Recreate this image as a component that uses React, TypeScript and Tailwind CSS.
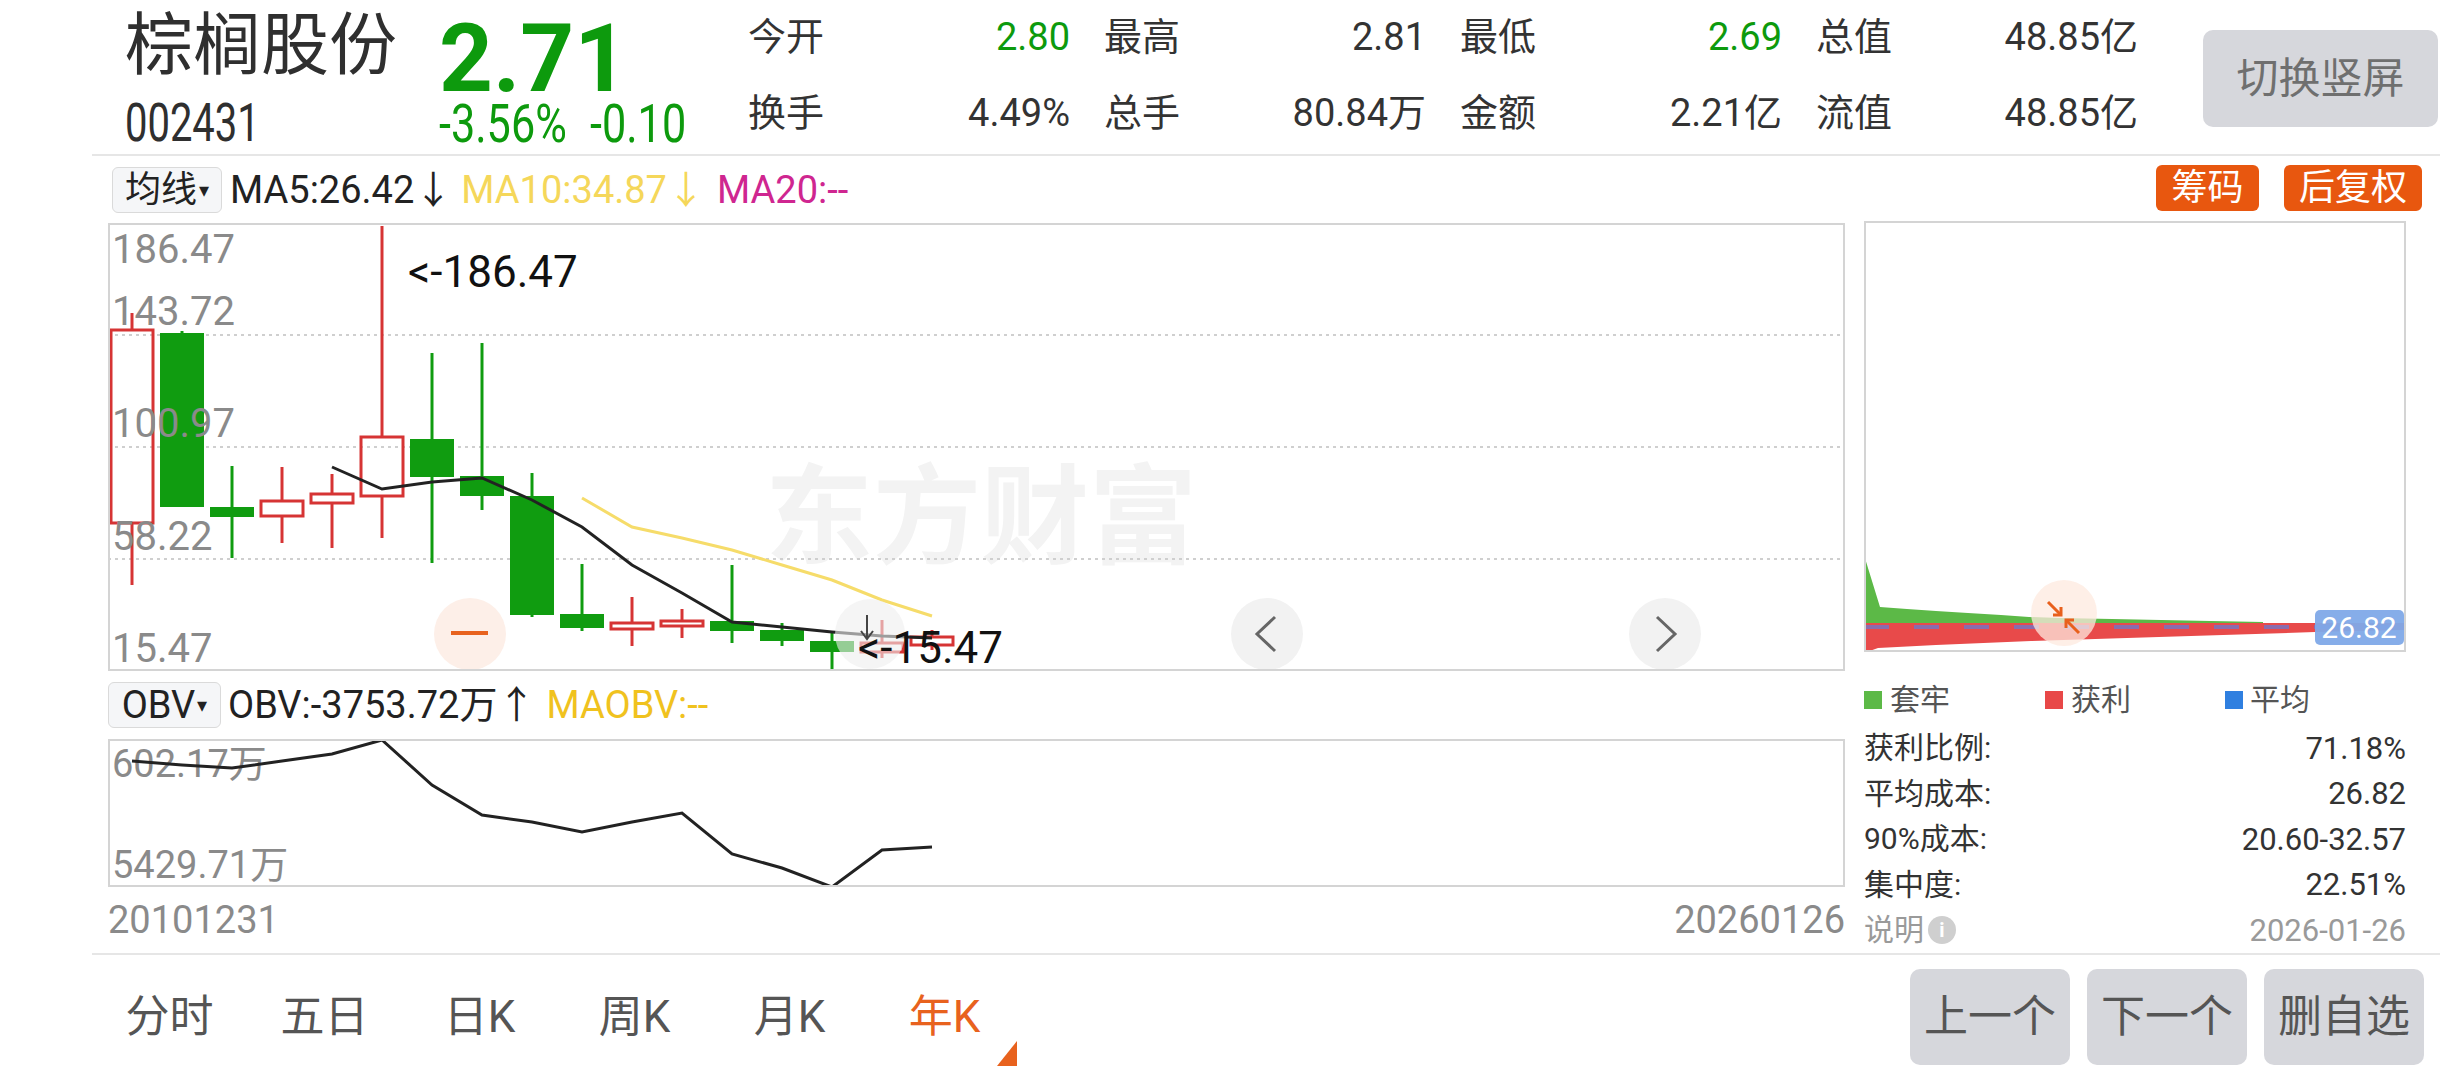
import React from "react";

const font = "font-['Roboto','Noto_Sans_CJK_SC',sans-serif]";

const green = "#109c10";
const red = "#d63434";

// [isRed, bodyTop, bodyBottom, wickTop, wickBottom] in chart pixels
const candles: number[][] = [
    [1, 107, 300, 90, 362],
    [0, 110, 284, 108, 284],
    [0, 284, 294, 243, 335],
    [1, 278, 293, 244, 320],
    [1, 271, 280, 251, 325],
    [1, 214, 273, 3, 315],
    [0, 216, 254, 130, 340],
    [0, 253, 273, 120, 287],
    [0, 273, 392, 250, 394],
    [0, 391, 405, 341, 408],
    [1, 400, 406, 374, 423],
    [1, 398, 403, 386, 415],
    [0, 398, 408, 342, 420],
    [0, 407, 418, 400, 423],
    [0, 418, 429, 409, 447],
    [1, 420, 429, 397, 435],
    [1, 414, 422, 407, 427],
];

const ma5 = [244, 266, 259, 255, 277, 304, 342, 370, 399, 404, 409, 413, 415];
const ma10 = [275, 304, 315, 327, 342, 357, 377, 393];
const obv = [22, 26, 29, 22, 15, 1, 46, 76, 83, 93, 83, 74, 115, 129, 148, 111, 108];

const cx = (i: number) => 24 + 50 * i;
const pts = (arr: number[], start: number) => arr.map((y, k) => `${cx(start + k)},${y}`).join(" ");

const quote: [string, string, boolean][][] = [
    [["今开", "2.80", true], ["最高", "2.81", false], ["最低", "2.69", true], ["总值", "48.85亿", false]],
    [["换手", "4.49%", false], ["总手", "80.84万", false], ["金额", "2.21亿", false], ["流值", "48.85亿", false]],
];

function Header() {
    return (
        <div className="flex h-[156px] ml-[92px] border-b-2 border-[#e6e6e6]">
            <div className="w-[347px] pl-[33px] flex flex-col text-[#2f2f2f]">
                <div className="mt-[12px] text-[68px] leading-[68px]">棕榈股份</div>
                <div className="mt-[18px] h-[50px] flex items-center">
                    <span className="inline-block origin-left scale-x-[0.74] text-[54px] leading-none">002431</span>
                </div>
            </div>
            <div className="w-[309px] flex flex-col text-[#0d9a0d]">
                <div className="mt-[19px] h-[80px] text-[94px] leading-[80px] font-bold">2.71</div>
                <div className="h-[50px] flex items-center gap-[29px] origin-left scale-x-[0.8] text-[54px] leading-none">
                    <span>-3.56%</span>
                    <span>-0.10</span>
                </div>
            </div>
            <div className="mt-[14px] grid grid-cols-[repeat(4,322px)] auto-rows-[46px] gap-x-[34px] gap-y-[30px] text-[38px] leading-none text-[#333]">
                {quote.flat().map(([k, v, g]) => (
                    <div key={k} className="flex items-center justify-between">
                        <span>{k}</span>
                        <span className={g ? "text-[#0d9a0d]" : ""}>{v}</span>
                    </div>
                ))}
            </div>
            <button className="ml-auto mr-[2px] mt-[30px] w-[235px] h-[97px] rounded-[10px] bg-[#d6d7dc] text-[42px] text-[#6f6f6f] flex items-center justify-center">切换竖屏</button>
        </div>
    );
}

function KChart() {
    return (
        <div className="h-[448px] border-2 border-[#d4d4d4] overflow-hidden">
            <svg width="1737" height="448" className={"-ml-[2px] -mt-[2px] " + font}>
                <text x="657" y="332" fontSize="108" fontWeight="700" fill="#f3f3f3">东方财富</text>
                {[112, 224, 336].map((y) => (
                    <line key={y} x1="0" x2="1737" y1={y} y2={y} stroke="#cfcfcf" strokeWidth="2" strokeDasharray="3 4" />
                ))}
                {candles.map(([isRed, bt, bb, wt, wb], i) => {
                    const x = cx(i);
                    return isRed ? (
                        <g key={i} stroke={red} strokeWidth="3" fill="none">
                            <line x1={x} x2={x} y1={wt} y2={bt} />
                            <line x1={x} x2={x} y1={bb} y2={wb} />
                            <rect x={x - 21} y={bt} width="42" height={bb - bt} />
                        </g>
                    ) : (
                        <g key={i}>
                            <line x1={x} x2={x} y1={wt} y2={wb} stroke={green} strokeWidth="3" />
                            <rect x={x - 22} y={bt} width="44" height={Math.max(bb - bt, 3)} fill={green} />
                        </g>
                    );
                })}
                <g fontSize="40" fill="#8a8a8a">
                    <text x="4" y="40">186.47</text>
                    <text x="4" y="102">143.72</text>
                    <text x="4" y="214">100.97</text>
                    <text x="4" y="327">58.22</text>
                    <text x="4" y="439">15.47</text>
                </g>
                <polyline points={pts(ma10, 9)} fill="none" stroke="#f6dc6a" strokeWidth="3" />
                <polyline points={pts(ma5, 4)} fill="none" stroke="#222" strokeWidth="3" />
                <text x="300" y="64" fontSize="44" fill="#111">&lt;-186.47</text>
                <circle cx="362" cy="411" r="36" fill="#fdefe8" />
                <line x1="343" x2="380" y1="410" y2="410" stroke="#e8621e" strokeWidth="4" />
                <circle cx="762" cy="411" r="35" fill="#eeeeee" opacity="0.6" />
                <g stroke="#444" strokeWidth="2" fill="none">
                    <line x1="759" x2="759" y1="392" y2="416" />
                    <polyline points="753,408 759,416 765,408" />
                </g>
                <text x="750" y="440" fontSize="44" fill="#111">&lt;-15.47</text>
                <circle cx="1159" cy="411" r="36" fill="#f2f2f2" />
                <polyline points="1167,394 1149,411 1167,428" fill="none" stroke="#666" strokeWidth="3" />
                <circle cx="1557" cy="411" r="36" fill="#f2f2f2" />
                <polyline points="1549,394 1567,411 1549,428" fill="none" stroke="#666" strokeWidth="3" />
            </svg>
        </div>
    );
}

function ObvChart() {
    return (
        <div className="h-[148px] border-2 border-[#d4d4d4] overflow-hidden">
            <svg width="1737" height="148" className={"-ml-[2px] -mt-[2px] " + font}>
                <g fontSize="38" fill="#8a8a8a">
                    <text x="4" y="38">602.17万</text>
                    <text x="4" y="139">5429.71万</text>
                </g>
                <polyline points={pts(obv, 0)} fill="none" stroke="#222" strokeWidth="3" />
            </svg>
        </div>
    );
}

function ChipChart() {
    const green2 = "0,334 16,386 43,388 72,390 104,392 137,394 165,396 196,397 248,398 297,399 347,400 399,401 399,403 0,403";
    const red2 = "0,402 541,402 541,409 451,411 359,414 263,417 167,420 72,424 14,427 0,432";
    return (
        <div className="w-[542px] h-[434px] border-2 border-[#d4d4d4] overflow-hidden">
            <svg width="542" height="434" className={"-ml-[2px] -mt-[2px] " + font}>
                <polygon points={green2} fill="#5cb947" />
                <polygon points={red2} fill="#e84a4a" />
                <line x1="0" x2="541" y1="406" y2="406" stroke="#8a6cae" strokeWidth="4" strokeDasharray="25 25" />
                <circle cx="200" cy="392" r="33" fill="#fde9df" opacity="0.75" />
                <g stroke="#e8601c" strokeWidth="3" fill="none">
                    <line x1="184" y1="381" x2="197" y2="394" />
                    <polyline points="189,394 197,394 197,386" />
                    <line x1="215" y1="412" x2="202" y2="399" />
                    <polyline points="210,399 202,399 202,407" />
                </g>
                <rect x="451" y="389" width="89" height="35" rx="5" fill="#80a9e8" opacity="0.95" />
                <text x="495" y="417" fontSize="30" fill="#fff" textAnchor="middle">26.82</text>
            </svg>
        </div>
    );
}

function ChipInfo() {
    const rows = [
        ["获利比例:", "71.18%"],
        ["平均成本:", "26.82"],
        ["90%成本:", "20.60-32.57"],
        ["集中度:", "22.51%"],
    ];
    return (
        <div className="w-[542px] flex flex-col pt-[28px] text-[30px] leading-none">
            <div className="h-[40px] flex items-center text-[#555]">
                <div className="w-[181px] flex items-center gap-[8px]">
                    <span className="w-[18px] h-[18px] bg-[#5cb947]" />
                    <span>套牢</span>
                </div>
                <div className="w-[180px] flex items-center gap-[8px]">
                    <span className="w-[18px] h-[18px] bg-[#e84848]" />
                    <span>获利</span>
                </div>
                <div className="flex items-center gap-[7px]">
                    <span className="w-[18px] h-[18px] bg-[#2f7fe0]" />
                    <span>平均</span>
                </div>
            </div>
            <div className="mt-[6px] flex flex-col text-[#333]">
                {rows.map(([k, v]) => (
                    <div key={k} className="h-[45.5px] flex items-center justify-between">
                        <span>{k}</span>
                        <span className="text-[31px]">{v}</span>
                    </div>
                ))}
                <div className="h-[45.5px] flex items-center justify-between text-[#9a9a9a]">
                    <span className="flex items-center gap-[4px]">
                        说明
                        <span className="w-[28px] h-[28px] rounded-full bg-[#cfcfcf] text-white text-[20px] font-bold flex items-center justify-center">i</span>
                    </span>
                    <span className="text-[31px]">2026-01-26</span>
                </div>
            </div>
        </div>
    );
}

function BottomBar() {
    const tabs = ["分时", "五日", "日K", "周K", "月K", "年K"];
    return (
        <div className="h-[125px] ml-[92px] border-t-2 border-[#e6e6e6] flex items-center">
            {tabs.map((t, i) => (
                <div key={t} className={"relative w-[155px] h-full flex items-center justify-center text-[44px] " + (i === 5 ? "text-[#e8621e]" : "text-[#555]")}>
                    {t}
                    {i === 5 && (
                        <svg width="20" height="25" className="absolute right-[5px] bottom-[12px]">
                            <polygon points="20,0 20,25 0,25" fill="#e8621e" />
                        </svg>
                    )}
                </div>
            ))}
            <div className="ml-auto mr-[16px] flex gap-[17px]">
                {["上一个", "下一个", "删自选"].map((b) => (
                    <button key={b} className="w-[160px] h-[96px] rounded-[10px] bg-[#d6d7dc] text-[44px] text-[#555] flex items-center justify-center">{b}</button>
                ))}
            </div>
        </div>
    );
}

export default function App() {
    return (
        <div className={"w-[2440px] h-[1080px] bg-white overflow-hidden text-[#333] " + font}>
            <Header />
            <div className="flex h-[797px] pl-[108px]">
                <div className="w-[1737px] flex flex-col">
                    <div className="h-[67px] flex items-center text-[38px] leading-none">
                        <div className="ml-[4px] w-[110px] h-[46px] rounded-[6px] border border-[#dadada] bg-[#f5f6f8] flex items-center justify-center text-[36px] text-[#222]">
                            均线<span className="text-[20px] ml-[2px]">▾</span>
                        </div>
                        <span className="ml-[8px] text-[#222]">MA5:26.42↓</span>
                        <span className="ml-[9px] text-[#f5d75a]">MA10:34.87↓</span>
                        <span className="ml-[12px] text-[#cf2690]">MA20:--</span>
                    </div>
                    <KChart />
                    <div className="h-[68px] flex items-center text-[38px] leading-none">
                        <div className="w-[113px] h-[46px] rounded-[6px] border border-[#dadada] bg-[#f5f6f8] flex items-center justify-center text-[#222]">
                            OBV<span className="text-[20px] ml-[2px]">▾</span>
                        </div>
                        <span className="ml-[7px] text-[#222]">OBV:-3753.72万↑</span>
                        <span className="ml-[11px] text-[#f0c21e]">MAOBV:--</span>
                    </div>
                    <ObvChart />
                    <div className="h-[66px] flex items-center justify-between text-[38px] text-[#8a8a8a]">
                        <span>20101231</span>
                        <span>20260126</span>
                    </div>
                </div>
                <div className="w-[558px] ml-[19px] flex flex-col">
                    <div className="h-[65px] flex items-center justify-end gap-[25px] text-[36px] text-white">
                        <span className="w-[103px] h-[46px] rounded-[6px] bg-[#e8570f] flex items-center justify-center">筹码</span>
                        <span className="w-[138px] h-[46px] rounded-[6px] bg-[#e8570f] flex items-center justify-center">后复权</span>
                    </div>
                    <ChipChart />
                    <ChipInfo />
                </div>
            </div>
            <BottomBar />
        </div>
    );
}
